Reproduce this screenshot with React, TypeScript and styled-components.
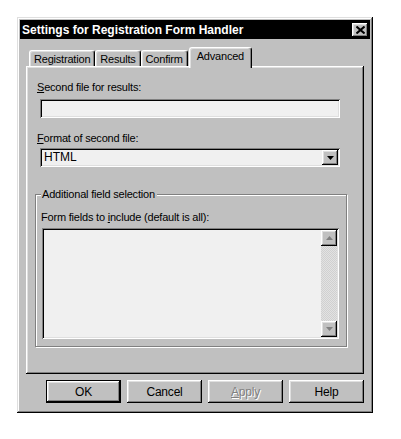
import React from 'react'
import styled, { createGlobalStyle, css } from 'styled-components'

const GlobalStyle = createGlobalStyle`
  html, body {
    margin: 0;
    padding: 0;
    background: #fff;
  }
  body {
    font-family: 'Liberation Sans', Arial, sans-serif;
    font-size: 11px;
    letter-spacing: -0.2px;
    color: #000;
  }
  * {
    box-sizing: border-box;
  }
`

const raised = css`
  box-shadow: inset -1px -1px #000, inset 1px 1px #fff, inset -2px -2px #808080,
    inset 2px 2px #dfdfdf;
`

const sunken = css`
  box-shadow: inset 1px 1px #808080, inset -1px -1px #fff, inset 2px 2px #000,
    inset -2px -2px #dfdfdf;
`

const Window = styled.div`
  margin: 17px 0 0 17px;
  width: 356px;
  padding: 3px;
  background: #c0c0c0;
  box-shadow: inset -1px -1px #000, inset 1px 1px #dfdfdf, inset -2px -2px #808080,
    inset 2px 2px #fff;
  display: flex;
  flex-direction: column;
`

const TitleBar = styled.div`
  height: 19px;
  background: #000;
  color: #fff;
  display: flex;
  align-items: center;
  justify-content: space-between;
  padding: 0 2px;
`

const Title = styled.span`
  font-weight: bold;
  font-size: 12px;
  letter-spacing: 0;
  line-height: 14px;
`

const CloseButton = styled.div`
  width: 16px;
  height: 14px;
  background: #c0c0c0;
  ${raised};
  display: flex;
  align-items: center;
  justify-content: center;
`

const Body = styled.div`
  padding: 8px 6px 7px;
  display: flex;
  flex-direction: column;
`

const TabRow = styled.div`
  display: flex;
  align-items: flex-end;
  height: 21px;
  margin-bottom: -2px;
  padding-left: 3px;
  position: relative;
  z-index: 1;
`

const Tab = styled.div<{ $active?: boolean }>`
  background: #c0c0c0;
  border: 1px solid;
  border-color: #fff #000 transparent #fff;
  border-bottom: none;
  border-radius: 3px 3px 0 0;
  box-shadow: inset -1px 0 #808080, inset 1px 1px #dfdfdf;
  line-height: 13px;
  white-space: nowrap;
  ${({ $active }) =>
    $active
      ? css`
          height: 21px;
          padding: 2px 7px 0;
          margin-left: 1px;
        `
      : css`
          height: 16px;
          padding: 2px 4px 0;
          margin-bottom: 2px;
        `}
`

const Panel = styled.div`
  height: 308px;
  padding: 15px 13px 0 9px;
  background: #c0c0c0;
  box-shadow: inset -1px -1px #000, inset 1px 1px #fff, inset -2px -2px #808080,
    inset 2px 2px #dfdfdf;
  display: flex;
  flex-direction: column;
  align-items: flex-start;
`

const Label = styled.div<{ $top?: number; $bottom?: number; $left?: number }>`
  line-height: 13px;
  margin: ${({ $top = 0, $bottom = 4, $left = 2 }) => `${$top}px 0 ${$bottom}px ${$left}px`};
`

const Key = styled.span`
  text-decoration: underline;
  text-underline-offset: 1px;
`

const TextField = styled.div`
  margin-left: 5px;
  width: 300px;
  height: 19px;
  background: #f0f0f0;
  ${sunken};
`

const Select = styled.div`
  margin-left: 5px;
  width: 300px;
  height: 19px;
  background: #f0f0f0;
  ${sunken};
  padding: 2px;
  display: flex;
  align-items: center;
`

const SelectValue = styled.span`
  flex: 1;
  padding-left: 2px;
  font-size: 12px;
  letter-spacing: 0;
  line-height: 15px;
`

const ArrowButton = styled.div<{ $disabled?: boolean }>`
  width: 16px;
  height: 15px;
  background: #c0c0c0;
  ${raised};
  display: flex;
  align-items: center;
  justify-content: center;
  color: ${({ $disabled }) => ($disabled ? '#808080' : '#000')};
`

const GroupBox = styled.div`
  position: relative;
  margin-top: 27px;
  width: 312px;
  height: 153px;
  border: 1px solid #808080;
  box-shadow: 1px 1px #fff, inset 1px 1px #fff;
  padding: 16px 0 0 5px;
`

const Legend = styled.span`
  position: absolute;
  top: -7px;
  left: 5px;
  padding: 0 2px 0 1px;
  background: #c0c0c0;
  line-height: 13px;
`

const ListBox = styled.div`
  margin-left: 1px;
  width: 297px;
  height: 111px;
  background: #f0f0f0;
  ${sunken};
  padding: 2px;
  display: flex;
  justify-content: flex-end;
`

const ScrollBar = styled.div`
  width: 16px;
  display: flex;
  flex-direction: column;
  justify-content: space-between;
  background-color: #d8d8d8;
  background-image: repeating-conic-gradient(#d0d0d0 0 25%, #e2e2e2 0 50%);
  background-size: 2px 2px;
`

const ScrollButton = styled(ArrowButton)`
  height: 16px;
`

const ButtonRow = styled.div`
  display: flex;
  justify-content: flex-end;
  gap: 6px;
  margin-top: 6px;
`

const Button = styled.div<{ $default?: boolean; $disabled?: boolean }>`
  width: 75px;
  height: 23px;
  background: #c0c0c0;
  display: flex;
  align-items: center;
  justify-content: center;
  font-size: 12px;
  letter-spacing: -0.2px;
  ${raised};
  ${({ $default }) =>
    $default &&
    css`
      box-shadow: inset 0 0 0 1px #000, inset -2px -2px #000, inset 2px 2px #fff,
        inset -3px -3px #808080, inset 3px 3px #dfdfdf;
    `}
  ${({ $disabled }) =>
    $disabled &&
    css`
      color: #808080;
      text-shadow: 1px 1px #fff;
    `}
`

const Triangle: React.FC<{ up?: boolean }> = ({ up }) => (
  <svg width="7" height="4" viewBox="0 0 7 4">
    <path d={up ? 'M3.5 0 L7 4 L0 4 Z' : 'M0 0 L7 0 L3.5 4 Z'} fill="currentColor" />
  </svg>
)

const CloseIcon = () => (
  <svg width="9" height="8" viewBox="0 0 9 8">
    <path d="M0.5 0.5 L8.5 7.5 M8.5 0.5 L0.5 7.5" stroke="#000" strokeWidth="2" />
  </svg>
)

const tabs = ['Registration', 'Results', 'Confirm', 'Advanced']

const App: React.FC = () => {
  const active = 'Advanced'

  return (
    <>
      <GlobalStyle />
      <Window>
        <TitleBar>
          <Title>Settings for Registration Form Handler</Title>
          <CloseButton>
            <CloseIcon />
          </CloseButton>
        </TitleBar>
        <Body>
          <TabRow>
            {tabs.map((t) => (
              <Tab key={t} $active={t === active}>
                {t}
              </Tab>
            ))}
          </TabRow>
          <Panel>
            <Label $bottom={5}>
              <Key>S</Key>econd file for results:
            </Label>
            <TextField />
            <Label $top={14} $bottom={3}>
              <Key>F</Key>ormat of second file:
            </Label>
            <Select>
              <SelectValue>HTML</SelectValue>
              <ArrowButton>
                <Triangle />
              </ArrowButton>
            </Select>
            <GroupBox>
              <Legend>Additional field selection</Legend>
              <Label $left={0}>
                Form fields to <Key>i</Key>nclude (default is all):
              </Label>
              <ListBox>
                <ScrollBar>
                  <ScrollButton $disabled>
                    <Triangle up />
                  </ScrollButton>
                  <ScrollButton $disabled>
                    <Triangle />
                  </ScrollButton>
                </ScrollBar>
              </ListBox>
            </GroupBox>
          </Panel>
          <ButtonRow>
            <Button $default>OK</Button>
            <Button>Cancel</Button>
            <Button $disabled>
              <Key>A</Key>pply
            </Button>
            <Button>Help</Button>
          </ButtonRow>
        </Body>
      </Window>
    </>
  )
}

export default App
